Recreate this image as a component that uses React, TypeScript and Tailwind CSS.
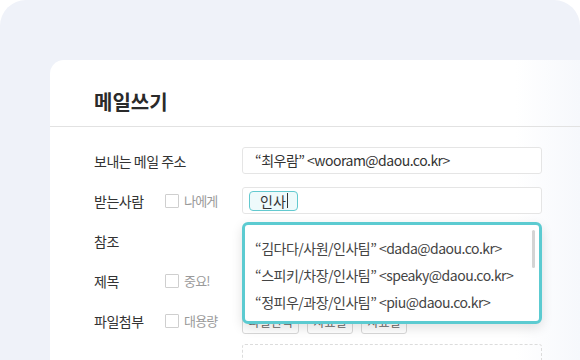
import React from "react";

const font = { fontFamily: '"Noto Sans CJK KR", "Noto Sans", sans-serif' };

function Check({ label }: { label: string }) {
  return (
    <div className="flex items-center gap-[5px]">
      <span className="w-[14px] h-[14px] border border-[#cfcfcf] bg-white rounded-[1px]" />
      <span className="text-[13px] tracking-[-0.8px] text-[#9a9a9a] leading-none">{label}</span>
    </div>
  );
}

function Row({ label, check, children }: { label: string; check?: string; children?: React.ReactNode }) {
  return (
    <div className="flex items-center h-[27px]">
      <div className="w-[71px] text-[14px] tracking-[-0.5px] text-[#333] leading-none whitespace-nowrap">{label}</div>
      <div className="w-[77px]">{check ? <Check label={check} /> : null}</div>
      <div className="w-[300px] h-[27px]">{children}</div>
    </div>
  );
}

export default function App() {
  return (
    <div className="w-[580px] h-[360px] bg-white overflow-hidden" style={font}>
      <div className="w-[580px] h-[360px] bg-[#eff2f9] rounded-t-[26px] pt-[60px] pl-[50px]">
        <div className="relative h-[300px] bg-white rounded-tl-[14px] overflow-hidden">
          <div className="absolute right-0 top-0 bottom-0 w-[64px] bg-gradient-to-r from-white to-[#f6f8fc]" />
          <div className="relative h-[67px] border-b border-[#e2e2e2] flex items-center pl-[44px] pt-[17px]">
            <span className="text-[20px] font-bold text-[#2a2a2a] leading-none">메일쓰기</span>
          </div>
          <div className="relative pl-[44px] pt-[20px] flex flex-col gap-[13px]">
            <Row label="보내는 메일 주소">
              <div className="h-full border border-[#e5e5e5] rounded-[3px] bg-white flex items-center pl-[12px] text-[14px] tracking-[-0.5px] text-[#333]">
                “최우람” &lt;wooram@daou.co.kr&gt;
              </div>
            </Row>
            <Row label="받는사람" check="나에게">
              <div className="h-full border border-[#e5e5e5] rounded-[3px] bg-white flex items-center pl-[6px]">
                <span className="h-[20px] w-[49px] pl-[10px] border border-[#63c9cf] bg-[#eefafb] rounded-[4px] flex items-center text-[14px] text-[#333] leading-none">
                  인사<span className="ml-[1px] w-[1px] h-[15px] bg-[#333]" />
                </span>
              </div>
            </Row>
            <Row label="참조" />
            <Row label="제목" check="중요!" />
            <Row label="파일첨부" check="대용량">
              <div className="h-full flex items-center gap-[8px] pt-[2px]">
                <span className="h-[24px] w-[57px] border border-[#d8d8d8] rounded-[3px] text-[12px] text-[#666] flex items-center justify-center">파일선택</span>
                <span className="h-[24px] w-[46px] border border-[#d8d8d8] rounded-[3px] text-[12px] text-[#666] flex items-center justify-center">자료실</span>
                <span className="h-[24px] w-[46px] border border-[#d8d8d8] rounded-[3px] text-[12px] text-[#666] flex items-center justify-center">자료실</span>
              </div>
            </Row>
            <div className="ml-[148px] w-[300px] h-[40px] border border-dashed border-[#dcdcdc] rounded-[3px] -mt-[3px]" />
          </div>

          <div className="absolute left-[192px] top-[162px] w-[300px] h-[102px] bg-white border-[3px] border-[#5ccbd1] rounded-[6px] shadow-[0_4px_12px_rgba(0,0,0,0.12)]">
            <div className="absolute right-[4px] top-[5px] w-[3px] h-[38px] bg-[#d4d4d4] rounded-full" />
            <div className="pl-[10px] pt-[10px] flex flex-col text-[14px] tracking-[-0.5px] text-[#444]">
              <div className="h-[27px] flex items-center">“김다다/사원/인사팀” &lt;dada@daou.co.kr&gt;</div>
              <div className="h-[27px] flex items-center">“스피키/차장/인사팀” &lt;speaky@daou.co.kr&gt;</div>
              <div className="h-[27px] flex items-center">“정피우/과장/인사팀” &lt;piu@daou.co.kr&gt;</div>
            </div>
          </div>
        </div>
      </div>
    </div>
  );
}
